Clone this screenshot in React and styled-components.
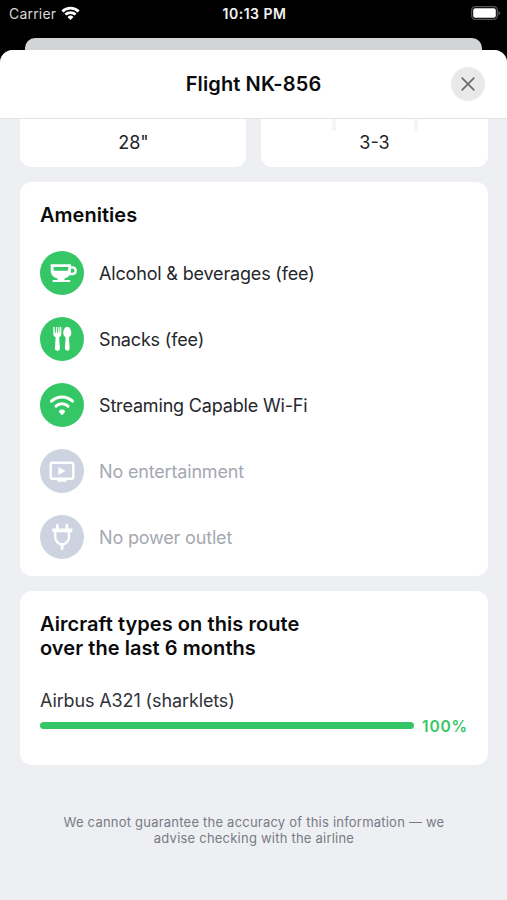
import React from "react";
import styled, { createGlobalStyle } from "styled-components";

const GlobalStyle = createGlobalStyle`
  * { box-sizing: border-box; }
  body { margin: 0; background: #000; font-family: Inter, "Liberation Sans", sans-serif; }
  h1, h2, p { margin: 0; }
`;

const Screen = styled.div`
  width: 507px;
  height: 900px;
  overflow: hidden;
  background: #000;
  display: flex;
  flex-direction: column;
`;

const StatusBar = styled.div`
  flex: none;
  height: 38px;
  padding: 4px 6px 0 9px;
  display: grid;
  grid-template-columns: 1fr auto 1fr;
  align-items: start;
  color: #fff;
  font-size: 14px;
  line-height: 20px;
`;

const Carrier = styled.div`
  display: flex;
  align-items: center;
  gap: 5px;
  color: #d8d8d8;
  letter-spacing: 0.2px;
`;

const WifiSlot = styled.span`
  display: flex;
  margin-top: -2px;
`;

const Clock = styled.div`
  font-weight: 600;
  font-size: 14px;
  letter-spacing: 0.5px;
  margin-right: 1px;
  color: #f4f4f4;
`;

const BatterySlot = styled.div`
  display: flex;
  justify-content: flex-end;
  padding-top: 2px;
`;

const BackSheet = styled.div`
  flex: none;
  height: 12px;
  margin: 0 25px;
  border-radius: 10px 10px 0 0;
  background: #d3d4d6;
`;

const Sheet = styled.main`
  flex: 1;
  display: flex;
  flex-direction: column;
  border-radius: 13px 13px 0 0;
  overflow: hidden;
  background: #eeeff3;
`;

const Header = styled.header`
  flex: none;
  height: 69px;
  padding: 0 22px;
  display: grid;
  grid-template-columns: 1fr auto 1fr;
  align-items: center;
  background: #fff;
  border-bottom: 1px solid #e2e3e5;
`;

const Title = styled.h1`
  grid-column: 2;
  font-size: 20px;
  line-height: 24px;
  font-weight: 600;
  letter-spacing: 0.12px;
  color: #0b0b0d;
`;

const CloseButton = styled.button`
  justify-self: end;
  width: 34px;
  height: 34px;
  padding: 0;
  border: 0;
  border-radius: 50%;
  background: #e9e9ea;
  display: grid;
  place-items: center;
`;

const Content = styled.div`
  padding: 0 19px 0 20px;
  display: flex;
  flex-direction: column;
  gap: 15px;
`;

const Facts = styled.div`
  display: grid;
  grid-template-columns: 226px 227px;
  gap: 15px;
  height: 48.4px;
`;

const FactCard = styled.div`
  display: flex;
  flex-direction: column;
  align-items: center;
  border-radius: 0 0 11px 11px;
  background: #fff;
`;

const SeatEdges = styled.div`
  width: 86px;
  height: 12px;
  border: solid #f6f6f7;
  border-width: 0 4px;
  flex: none;
`;

const FactValue = styled.div`
  margin-top: ${(p) => (p.$first ? 12 : 0)}px;
  padding-left: ${(p) => (p.$first ? 1 : 0)}px;
  font-size: 18px;
  line-height: 24px;
  color: #222326;
`;

const Card = styled.section`
  height: ${(p) => p.$height}px;
  padding: 21px 20px 0;
  border-radius: 12px;
  background: #fff;
`;

const CardTitle = styled.h2`
  font-size: 20px;
  line-height: 24.5px;
  font-weight: 600;
  letter-spacing: ${(p) => p.$spacing}px;
  color: #0b0b0d;
`;

const AmenityList = styled.div`
  margin-top: 23px;
  display: grid;
  gap: 22px;
`;

const Amenity = styled.div`
  height: 44px;
  display: flex;
  align-items: center;
  gap: 15px;
  color: ${(p) => (p.$off ? "#a4a8b1" : "#25272c")};
  font-size: 18px;
  letter-spacing: -0.17px;
`;

const Badge = styled.svg`
  width: 44px;
  height: 44px;
  border-radius: 50%;
  background: ${(p) => (p.$off ? "#cdd3e0" : "#35c765")};
`;

const AmenityLabel = styled.span`
  padding-top: 1px;
`;

const Aircraft = styled.div`
  margin-top: 28px;
  font-size: 18px;
  line-height: 24px;
  letter-spacing: -0.12px;
  color: #303238;
`;

const ShareRow = styled.div`
  height: 26px;
  display: flex;
  align-items: center;
  gap: 8px;
`;

const Track = styled.div`
  width: 374px;
  height: 7px;
`;

const Fill = styled.div`
  height: 100%;
  border-radius: 4px;
  background: #35c765;
`;

const Percent = styled.div`
  padding-top: 2px;
  color: #35c765;
  font-size: 15.5px;
  font-weight: 600;
  letter-spacing: 0.85px;
`;

const Disclaimer = styled.p`
  margin-top: 34px;
  text-align: center;
  font-size: 13px;
  line-height: 16px;
  letter-spacing: 0.22px;
  color: #777b83;
`;

function WifiStatus() {
  return (
    <svg width="19" height="15" viewBox="0 0 19 15" fill="#fff">
      <path d="M.4 4.4a13.3 13.3 0 0 1 18.2 0l-1.9 2a10.5 10.5 0 0 0-14.4 0z" />
      <path d="M3.4 7.6a9 9 0 0 1 12.2 0l-1.9 2a6.2 6.2 0 0 0-8.4 0z" />
      <path d="M6.5 10.9a4.5 4.5 0 0 1 6 0l-3 3.2z" />
    </svg>
  );
}

function Battery() {
  return (
    <svg width="30" height="15" viewBox="0 0 30 15">
      <rect x=".7" y=".7" width="25.6" height="12.6" rx="3.5" fill="#000" stroke="#55555a" strokeWidth="1.3" />
      <rect x="2.2" y="2.2" width="22.6" height="9.6" rx="2" fill="#fff" />
      <path d="M27.5 4.8q1.7.6 1.7 2.3t-1.7 2.3z" fill="#55555a" />
    </svg>
  );
}

const icons = {
  cup: (
    <>
      <path d="M10.7 13.3H31v6.2c0 5.2-3.8 7.8-7.6 7.8h-5.1c-4.1 0-7.6-3-7.6-7.8z" fill="#fff" />
      <path d="M13.4 15.9h15l-.4 3.8H13.8z" fill="#35c765" />
      <path d="M30.6 16.4h1.8a3.3 3.3 0 0 1 0 6.6h-2.5" fill="none" stroke="#fff" strokeWidth="2.4" />
      <path d="M17.5 26h7v3.4h-7z" fill="#fff" />
      <path d="M13.4 30.1h16" stroke="#fff" strokeWidth="2" strokeLinecap="round" />
    </>
  ),
  cutlery: (
    <g fill="#fff">
      <path d="M13.3 10.3c0-.7 1.3-.7 1.4 0l.2 5.4h.9l.2-5.4c0-.7 1-.7 1.1 0l.1 5.4h.8l.3-5.4c0-.7 1.1-.7 1.1 0l.2 5.4h.3l.2-5.4c0-.7 1.2-.7 1.2 0v6.4c0 1.8-.9 2.8-2.2 3.5l.8 11.1a2.5 2.5 0 0 1-5 0l.7-11.1c-1.5-.7-2.3-1.7-2.3-3.5z" />
      <path d="M27.3 9.8c2.4 0 4 3 4 6 0 2.5-1 3.7-2.3 4.5l.7 11a2.4 2.4 0 0 1-4.8 0l.7-11c-1.3-.8-2.3-2-2.3-4.5 0-3 1.6-6 4-6z" />
    </g>
  ),
  wifi: (
    <g fill="none" stroke="#fff" strokeLinecap="round">
      <path d="M11.5 18.2c5.9-5.6 15.1-5.6 21 0" strokeWidth="3" />
      <path d="M16 23.2c3.4-3.2 8.6-3.2 12 0" strokeWidth="3" />
      <path d="M19.6 28.4c1.2-1.5 3.6-1.5 4.8 0L22 31.2z" strokeWidth="1.5" strokeLinejoin="round" fill="#fff" />
    </g>
  ),
  tv: (
    <g fill="#fff">
      <rect x="10.7" y="13.8" width="22.6" height="16" rx="1.8" fill="none" stroke="#fff" strokeWidth="2.4" />
      <path d="M18.4 17.9v8l7-4z" />
      <path d="M17.2 30h9.6v1.9q0 .8-.8.8h-8q-.8 0-.8-.8z" />
    </g>
  ),
  plug: (
    <g fill="none" stroke="#fff">
      <path d="M17.3 14.5V9.3M26.9 14.5V9.3" strokeWidth="2.7" />
      <path d="M12.3 15.4h20" strokeWidth="3.7" />
      <path d="M15.2 16v6.5q0 2.6 1.9 4.3l1.7 1.7q.7.7 1.7.7h3.2q1 0 1.7-.7l1.7-1.7q1.9-1.7 1.9-4.3V16" strokeWidth="2.4" />
      <path d="M22.1 29v5.8" strokeWidth="2.7" />
    </g>
  ),
};

const amenities = [
  { icon: "cup", label: "Alcohol & beverages (fee)" },
  { icon: "cutlery", label: "Snacks (fee)" },
  { icon: "wifi", label: "Streaming Capable Wi-Fi" },
  { icon: "tv", label: "No entertainment", off: true },
  { icon: "plug", label: "No power outlet", off: true },
];

export default function App() {
  const share = 100;
  return (
    <Screen>
      <GlobalStyle />
      <StatusBar>
        <Carrier>Carrier <WifiSlot><WifiStatus /></WifiSlot></Carrier>
        <Clock>10:13 PM</Clock>
        <BatterySlot><Battery /></BatterySlot>
      </StatusBar>
      <BackSheet />
      <Sheet>
        <Header>
          <Title>Flight NK-856</Title>
          <CloseButton aria-label="Close">
            <svg width="14" height="14" viewBox="0 0 14 14" stroke="#6d6d70" strokeWidth="1.8" strokeLinecap="round">
              <path d="M1.2 1.2l11.6 11.6M12.8 1.2L1.2 12.8" />
            </svg>
          </CloseButton>
        </Header>
        <Content>
          <Facts>
            <FactCard><FactValue $first>28"</FactValue></FactCard>
            <FactCard><SeatEdges /><FactValue>3-3</FactValue></FactCard>
          </Facts>
          <Card $height={393.6}>
            <CardTitle $spacing={0.02}>Amenities</CardTitle>
            <AmenityList>
              {amenities.map((a) => (
                <Amenity key={a.label} $off={a.off}>
                  <Badge viewBox="0 0 44 44" $off={a.off}>{icons[a.icon]}</Badge>
                  <AmenityLabel>{a.label}</AmenityLabel>
                </Amenity>
              ))}
            </AmenityList>
          </Card>
          <Card $height={174}>
            <CardTitle $spacing={0.06}>Aircraft types on this route<br />over the last 6 months</CardTitle>
            <Aircraft>Airbus A321 (sharklets)</Aircraft>
            <ShareRow>
              <Track><Fill style={{ width: `${share}%` }} /></Track>
              <Percent>{share}%</Percent>
            </ShareRow>
          </Card>
          <Disclaimer>We cannot guarantee the accuracy of this information — we<br />advise checking with the airline</Disclaimer>
        </Content>
      </Sheet>
    </Screen>
  );
}
